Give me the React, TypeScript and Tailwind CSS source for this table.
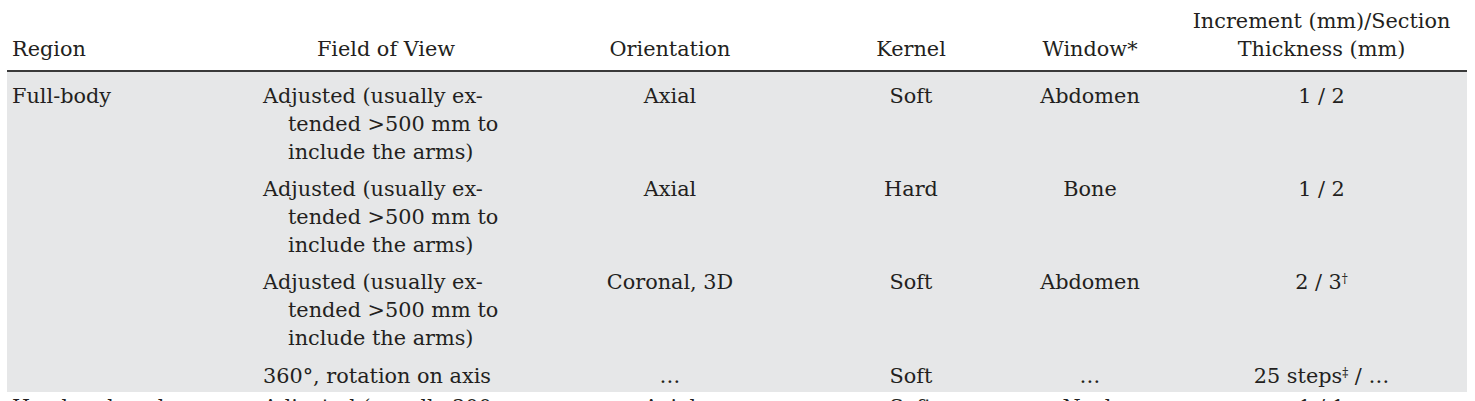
const font = { fontFamily: '"DejaVu Serif", "Liberation Serif", serif' };

type Row = {
  region: string;
  fov: string[];
  orientation: string;
  kernel: string;
  window: string;
  increment: React.ReactNode;
};

const fovLong = ["Adjusted (usually ex-", "tended >500 mm to", "include the arms)"];

const rows: Row[] = [
  { region: "Full-body", fov: fovLong, orientation: "Axial", kernel: "Soft", window: "Abdomen", increment: "1 / 2" },
  { region: "", fov: fovLong, orientation: "Axial", kernel: "Hard", window: "Bone", increment: "1 / 2" },
  {
    region: "",
    fov: fovLong,
    orientation: "Coronal, 3D",
    kernel: "Soft",
    window: "Abdomen",
    increment: (
      <>
        2 / 3<sup className="text-[12px] leading-none">†</sup>
      </>
    ),
  },
  {
    region: "",
    fov: ["360°, rotation on axis"],
    orientation: "…",
    kernel: "Soft",
    window: "…",
    increment: (
      <>
        25 steps<sup className="text-[12px] leading-none">‡</sup> / …
      </>
    ),
  },
];

const cols = "grid grid-cols-[243px_272px_296px_186px_172px_291px]";

const FovCell = ({ lines }: { lines: string[] }) => (
  <div className="pl-[38px] -indent-[25px]">
    {lines.map((l, i) => (
      <span key={i}>
        {l}
        {i < lines.length - 1 && <br />}
      </span>
    ))}
  </div>
);

const BodyRow = ({ row }: { row: Row }) => (
  <div className={cols + " pt-[4px] pb-[5px] last:pt-[5px] last:pb-[2px]"}>
    <div className="pl-[5px]">{row.region}</div>
    <FovCell lines={row.fov} />
    <div className="text-center">{row.orientation}</div>
    <div className="text-center">{row.kernel}</div>
    <div className="text-center">{row.window}</div>
    <div className="text-center">{row.increment}</div>
  </div>
);

export default function App() {
  return (
    <div className="w-full h-[401px] overflow-hidden bg-white">
      <div
        className="ml-[7px] w-[1460px] text-[20.8px] leading-[28px] text-[#231f20]"
        style={font}
      >
        {/* header */}
        <div className={cols + " items-end pt-[7px] pb-[7px] border-b-2 border-[#3a3a3a]"}>
          <div className="pl-[5px]">Region</div>
          <div className="text-center">Field of View</div>
          <div className="text-center">Orientation</div>
          <div className="text-center">Kernel</div>
          <div className="text-center">Window*</div>
          <div className="text-center">
            Increment (mm)/Section
            <br />
            Thickness (mm)
          </div>
        </div>

        {/* shaded group */}
        <div className="bg-[#e6e7e8] pt-[6px]">
          {rows.map((r, i) => (
            <BodyRow key={i} row={r} />
          ))}
        </div>

        {/* next group, cut by the window */}
        <div className={cols + " pt-[1px]"}>
          <div className="pl-[5px]">Head and neck</div>
          <FovCell lines={["Adjusted (usually 300"]} />
          <div className="text-center">Axial</div>
          <div className="text-center">Soft</div>
          <div className="text-center">Neck</div>
          <div className="text-center">1 / 1</div>
        </div>
      </div>
    </div>
  );
}
